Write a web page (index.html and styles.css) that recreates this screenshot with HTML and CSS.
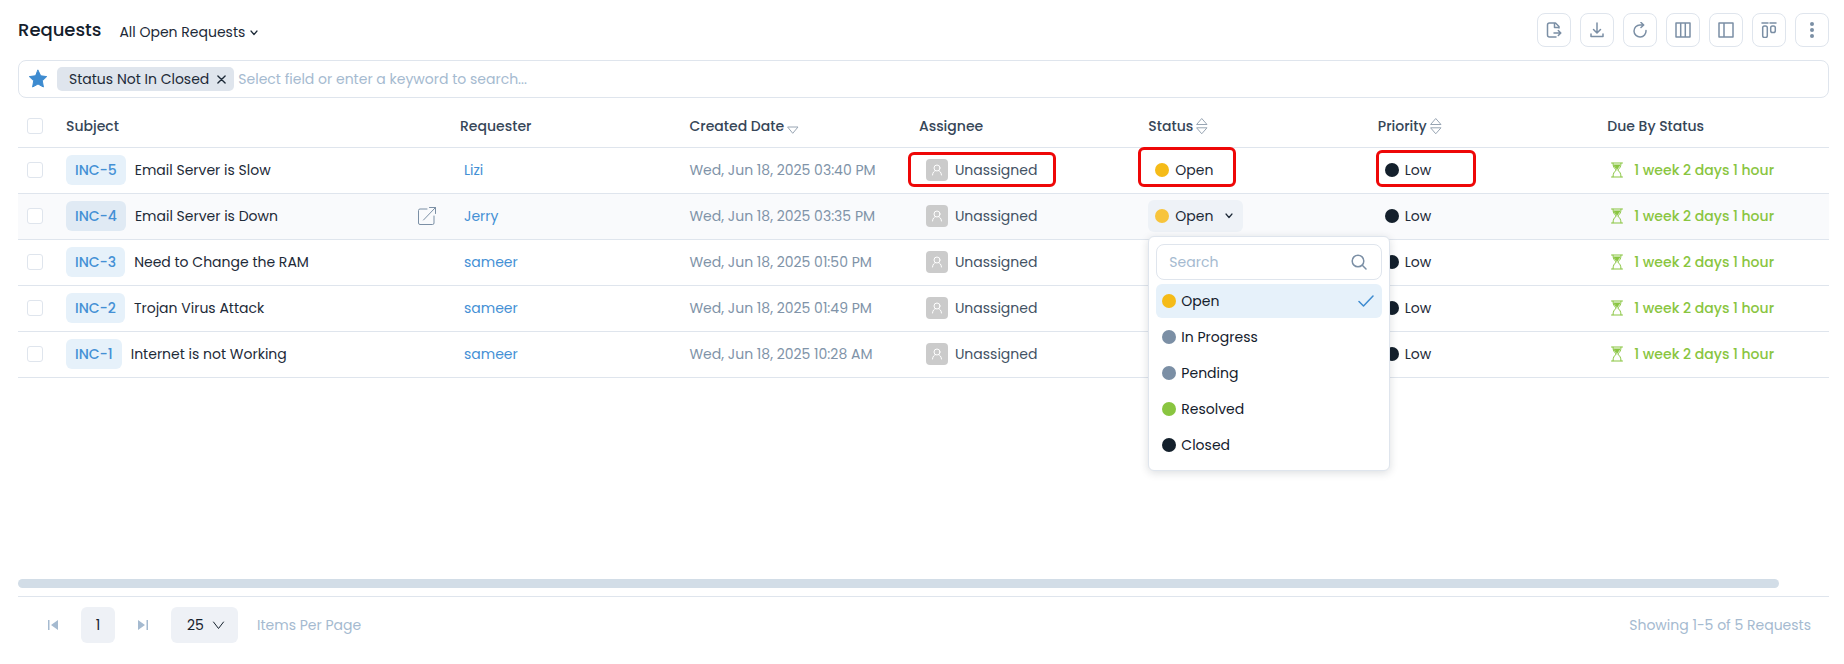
FILE: index.html
```html
<!DOCTYPE html>
<html lang="en">
<head>
<meta charset="utf-8">
<title>Requests</title>
<link rel="stylesheet" href="styles.css">
</head>
<body>
<svg class="sprite" aria-hidden="true">
  <symbol id="user" viewBox="0 0 22 22"><circle cx="11" cy="9" r="3"/><path d="M6.5 16c.3-2.600 1.600-4 3-4.400M15.500 16c-.3-2.600-1.600-4-3-4.400"/></symbol>
  <symbol id="hourglass" viewBox="0 0 12 16"><path d="M.5 1h11M.5 15h11M2 1.200c0 3.600 1.200 5 3.300 6.800C3.200 9.800 2 11.400 2 14.800M10 1.200c0 3.600-1.200 5-3.300 6.800 2.100 1.800 3.300 3.400 3.300 6.800"/><path class="sand" d="M3 3h6L6 7z"/></symbol>
  <symbol id="chevron" viewBox="0 0 8 6"><path d="M1 1l3 3.500L7 1"/></symbol>
  <symbol id="sort" viewBox="0 0 12 16"><path d="M1 6.500h10L6 .8zM1 9.800h10L6 15.500z"/></symbol>
</svg>
<main class="page">
  <header class="topbar">
    <h1 class="title">Requests</h1>
    <button class="view" type="button">All Open Requests <svg class="chevron" viewBox="0 0 8 6"><use href="#chevron"/></svg></button>
    <div class="tools">
      <button class="tool" type="button" aria-label="Export"><svg viewBox="0 0 16 16"><path d="M13 6V4.500L9.500 1H3.500Q1.500 1 1.500 3v10q0 2 2 2H10M8.500 1v4.500H13M8 11h6.500M12.300 8.500l2.500 2.500-2.500 2.500"/></svg></button>
      <button class="tool" type="button" aria-label="Download"><svg viewBox="0 0 16 16"><path d="M8 1v9.500M4.500 7.500L8 11l3.500-3.500M2 12v2.500h12V12"/></svg></button>
      <button class="tool" type="button" aria-label="Refresh"><svg viewBox="0 0 16 16"><path d="M14 8.500A6 6 0 1 1 8 3h3.500M9 .5L11.700 3 9 5.500"/></svg></button>
      <button class="tool" type="button" aria-label="Columns"><svg viewBox="0 0 16 16"><path d="M1 1h14v14H1zM5.700 1v14M10.300 1v14"/></svg></button>
      <button class="tool" type="button" aria-label="Side panel"><svg viewBox="0 0 16 16"><path d="M1 1h14v14H1zM6 1v14"/></svg></button>
      <button class="tool" type="button" aria-label="Board view"><svg viewBox="0 0 16 16"><path d="M1 1h6M9 1h6"/><rect x="1.700" y="4" width="4.600" height="11.500" rx="1.800"/><rect x="9.700" y="4" width="4.600" height="6.500" rx="1.800"/></svg></button>
      <button class="tool" type="button" aria-label="More"><svg class="solid" viewBox="0 0 16 16"><circle cx="8" cy="2" r="2"/><circle cx="8" cy="8" r="2"/><circle cx="8" cy="14" r="2"/></svg></button>
    </div>
  </header>

  <div class="filter">
    <svg class="star" viewBox="0 0 20 20"><path d="M10 1.200l2.700 5.600 6 .8-4.400 4.200 1.100 6.200L10 15l-5.400 3 1.100-6.200L1.300 7.600l6-.8z"/></svg>
    <span class="chip">Status Not In Closed <button class="chip-x" type="button" aria-label="Remove filter"><svg viewBox="0 0 10 10"><path d="M1 1l8 8M9 1L1 9"/></svg></button></span>
    <input class="query" type="text" aria-label="Search requests" placeholder="Select field or enter a keyword to search...">
  </div>

  <div class="grid">
  <table class="table">
    <colgroup><col class="c-check"><col class="c-subject"><col class="c-std"><col class="c-std"><col class="c-std"><col class="c-std"><col class="c-std"><col></colgroup>
    <thead>
      <tr>
        <th><input class="check" type="checkbox" aria-label="Select all"></th>
        <th>Subject</th><th>Requester</th>
        <th><span class="sortable">Created Date <svg class="desc" viewBox="0 0 12 8"><path d="M1 1h10L6 7z"/></svg></span></th>
        <th>Assignee</th>
        <th><span class="sortable">Status <svg class="sort" viewBox="0 0 12 16"><use href="#sort"/></svg></span></th>
        <th><span class="sortable">Priority <svg class="sort" viewBox="0 0 12 16"><use href="#sort"/></svg></span></th>
        <th>Due By Status</th>
      </tr>
    </thead>
    <tbody>
      <tr>
        <td><input class="check" type="checkbox" aria-label="Select INC-5"></td>
        <td><div class="subject"><span class="badge">INC-5</span>Email Server is Slow</div></td>
        <td><a class="person" href="#">Lizi</a></td>
        <td class="date">Wed, Jun 18, 2025 03:40 PM</td>
        <td><div class="assignee"><svg class="avatar" viewBox="0 0 22 22"><use href="#user"/></svg>Unassigned</div><span class="mark mark-assignee"></span></td>
        <td><div class="state"><i class="dot yellow"></i>Open</div><span class="mark mark-status"></span></td>
        <td><div class="state"><i class="dot black"></i>Low</div><span class="mark mark-priority"></span></td>
        <td><div class="due"><svg viewBox="0 0 12 16"><use href="#hourglass"/></svg>1 week 2 days 1 hour</div></td>
      </tr>
      <tr class="hovered">
        <td><input class="check" type="checkbox" aria-label="Select INC-4"></td>
        <td><div class="subject"><span class="badge">INC-4</span>Email Server is Down<a class="open" href="#" aria-label="Open INC-4"><svg viewBox="0 0 20 20"><path d="M10 3H3Q1.500 3 1.500 4.500V17Q1.500 18.500 3 18.500H15.500Q17 18.500 17 17V10M6.500 14L18.500 1.500M12.500 1.500h6v6"/></svg></a></div></td>
        <td><a class="person" href="#">Jerry</a></td>
        <td class="date">Wed, Jun 18, 2025 03:35 PM</td>
        <td><div class="assignee"><svg class="avatar" viewBox="0 0 22 22"><use href="#user"/></svg>Unassigned</div></td>
        <td>
          <button class="state picker" type="button" aria-expanded="true"><i class="dot yellow"></i>Open <svg class="chevron" viewBox="0 0 8 6"><use href="#chevron"/></svg></button>
          <div class="menu">
            <label class="menu-search"><input type="text" placeholder="Search" aria-label="Search status"><svg viewBox="0 0 16 16"><circle cx="7" cy="7" r="5.800"/><path d="M11.300 11.300L15 15"/></svg></label>
            <button class="option chosen" type="button"><i class="dot yellow"></i>Open<svg class="tick" viewBox="0 0 16 12"><path d="M1 6.500L5.500 11 15 1"/></svg></button>
            <button class="option" type="button"><i class="dot slate"></i>In Progress</button>
            <button class="option" type="button"><i class="dot slate"></i>Pending</button>
            <button class="option" type="button"><i class="dot green"></i>Resolved</button>
            <button class="option" type="button"><i class="dot black"></i>Closed</button>
          </div>
        </td>
        <td><div class="state"><i class="dot black"></i>Low</div></td>
        <td><div class="due"><svg viewBox="0 0 12 16"><use href="#hourglass"/></svg>1 week 2 days 1 hour</div></td>
      </tr>
      <tr>
        <td><input class="check" type="checkbox" aria-label="Select INC-3"></td>
        <td><div class="subject"><span class="badge">INC-3</span>Need to Change the RAM</div></td>
        <td><a class="person" href="#">sameer</a></td>
        <td class="date">Wed, Jun 18, 2025 01:50 PM</td>
        <td><div class="assignee"><svg class="avatar" viewBox="0 0 22 22"><use href="#user"/></svg>Unassigned</div></td>
        <td></td>
        <td><div class="state"><i class="dot black"></i>Low</div></td>
        <td><div class="due"><svg viewBox="0 0 12 16"><use href="#hourglass"/></svg>1 week 2 days 1 hour</div></td>
      </tr>
      <tr>
        <td><input class="check" type="checkbox" aria-label="Select INC-2"></td>
        <td><div class="subject"><span class="badge">INC-2</span>Trojan Virus Attack</div></td>
        <td><a class="person" href="#">sameer</a></td>
        <td class="date">Wed, Jun 18, 2025 01:49 PM</td>
        <td><div class="assignee"><svg class="avatar" viewBox="0 0 22 22"><use href="#user"/></svg>Unassigned</div></td>
        <td></td>
        <td><div class="state"><i class="dot black"></i>Low</div></td>
        <td><div class="due"><svg viewBox="0 0 12 16"><use href="#hourglass"/></svg>1 week 2 days 1 hour</div></td>
      </tr>
      <tr>
        <td><input class="check" type="checkbox" aria-label="Select INC-1"></td>
        <td><div class="subject"><span class="badge">INC-1</span>Internet is not Working</div></td>
        <td><a class="person" href="#">sameer</a></td>
        <td class="date">Wed, Jun 18, 2025 10:28 AM</td>
        <td><div class="assignee"><svg class="avatar" viewBox="0 0 22 22"><use href="#user"/></svg>Unassigned</div></td>
        <td></td>
        <td><div class="state"><i class="dot black"></i>Low</div></td>
        <td><div class="due"><svg viewBox="0 0 12 16"><use href="#hourglass"/></svg>1 week 2 days 1 hour</div></td>
      </tr>
    </tbody>
  </table>
  </div>

  <div class="scroll"></div>
  <footer class="pager">
    <button class="step" type="button" aria-label="First page"><svg viewBox="0 0 10 12"><path d="M0 1h1.500v10H0zM10 1v10L3 6z"/></svg></button>
    <button class="current" type="button">1</button>
    <button class="step" type="button" aria-label="Last page"><svg viewBox="0 0 10 12"><path d="M8.500 1H10v10H8.500zM0 1v10l7-5z"/></svg></button>
    <span class="size"><select id="size"><option>25</option></select><svg viewBox="0 0 12 9"><path d="M1 1l5 6.500L11 1"/></svg></span>
    <label for="size">Items Per Page</label>
    <span class="count">Showing 1-5 of 5 Requests</span>
  </footer>
</main>
</body>
</html>
```
FILE: styles.css
```css
* { box-sizing: border-box; }

body {
  margin: 0;
  background: #fff;
  color: #1d2a38;
  font: 14px/20px Poppins, Inter, "Open Sans", sans-serif;
}

button, input, select {
  margin: 0;
  padding: 0;
  border: 0;
  background: none;
  color: inherit;
  font: inherit;
}

svg {
  flex: none;
  fill: none;
  stroke: currentColor;
  stroke-linecap: round;
  stroke-linejoin: round;
}

a { text-decoration: none; }
.sprite { position: absolute; width: 0; height: 0; }

.page {
  display: flex;
  flex-direction: column;
  min-height: 100vh;
  padding: 13px 15px 21px 18px;
}

/* Title bar */
.topbar { display: flex; align-items: center; height: 34px; }
.title { margin: 0; font-size: 18px; font-weight: 500; color: #14202c; }
.view { display: flex; align-items: center; gap: 5px; margin-left: 18px; padding-top: 3px; }
.view .chevron { margin-top: 2px; }
.chevron { width: 8px; height: 6px; stroke-width: 1.2; }
.tools { display: flex; gap: 9px; margin-left: auto; }
.tool {
  display: grid;
  place-items: center;
  width: 34px;
  height: 34px;
  border: 1px solid #dfe5ed;
  border-radius: 8px;
  color: #7b8fa5;
}
.tool svg { width: 16px; height: 16px; stroke-width: 1.5; }
.tool .solid { fill: currentColor; stroke: none; }

/* Filter bar */
.filter {
  display: flex;
  align-items: center;
  height: 38px;
  margin-top: 13px;
  padding: 0 9px;
  border: 1px solid #dfe5ed;
  border-radius: 8px;
}
.star { width: 20px; height: 20px; fill: #3d8bd0; stroke: #3d8bd0; }
.chip {
  display: flex;
  align-items: center;
  gap: 8px;
  height: 24px;
  margin: 0 4px 0 9px;
  padding: 0 8px 0 12px;
  border-radius: 5px;
  background: #dfe5ed;
}
.chip-x { display: grid; }
.chip-x svg { width: 9px; height: 9px; stroke-width: 1.5; }
.query { flex: 1; min-width: 0; outline: 0; }
::placeholder { color: #a5bad0; opacity: 1; }

/* Table */
.grid { flex: 1; }
.table { width: 100%; border-collapse: collapse; table-layout: fixed; }
.c-check { width: 48px; }
.c-subject { width: 394px; }
.c-std { width: 12.67%; }
th, td {
  position: relative;
  height: 46px;
  padding: 0;
  border-bottom: 1px solid #dfe5ed;
  text-align: left;
  white-space: nowrap;
}
th { height: 49px; padding-top: 8px; font-weight: 500; color: #364658; }
.sortable { display: flex; align-items: center; gap: 3px; }
.sort { width: 12px; height: 16px; color: #98a5b3; }
.desc { width: 12px; height: 8px; margin-top: 8px; color: #98a5b3; }
.check {
  display: block;
  width: 16px;
  height: 16px;
  margin-left: 9px;
  border: 1px solid #dfe5ed;
  border-radius: 3px;
  background: #fff;
  appearance: none;
}
.hovered { background: #f9fafc; }
.subject { display: flex; align-items: center; gap: 9px; }
.badge {
  padding: 5px 9px;
  border-radius: 6px;
  background: #e6f1fa;
  color: #4490d5;
  font-weight: 500;
}
.hovered .badge { background: #e0eaf4; }
.open { margin: 0 23px 0 auto; color: #7b8fa5; }
.open svg { display: block; width: 20px; height: 20px; }
.person { margin-left: 4px; color: #4490d5; }
.date { color: #8093a8; }
.assignee { display: flex; align-items: center; gap: 7px; padding-left: 7px; color: #435264; }
.avatar { width: 22px; height: 22px; border-radius: 4px; background: #cbcbcb; color: #fff; }
.state {
  display: inline-flex;
  align-items: center;
  height: 32px;
  padding: 0 7px;
}
.dot { flex: none; width: 14px; height: 14px; margin-right: 6px; border-radius: 50%; }
.yellow { background: #f5bb18; }
.slate { background: #7b8fa5; }
.green { background: #89c540; }
.black { background: #14202c; }
.picker { border-radius: 6px; background: #eef2f7; }
.picker .chevron { margin: 0 3px 0 12px; }
.picker .yellow { background: #f7c43c; }
.due { display: flex; align-items: center; gap: 11px; padding-left: 4px; color: #89c540; font-weight: 500; }
.due svg { width: 12px; height: 16px; }
.sand { fill: currentColor; }

/* Red callouts around the first row's values */
.mark { position: absolute; border: 3px solid #ee0707; border-radius: 6px; }
.mark-assignee { top: 4px; left: -11px; width: 148px; height: 35px; }
.mark-status { top: -1px; left: -10px; width: 98px; height: 40px; }
.mark-priority { top: 2px; left: -2px; width: 100px; height: 37px; }

/* Status menu */
.menu {
  position: absolute;
  z-index: 2;
  top: 42px;
  left: 0;
  display: grid;
  grid-template-columns: minmax(0, 1fr);
  gap: 2px;
  width: 242px;
  padding: 7px 7px 8px;
  border: 1px solid #dfe5ed;
  border-radius: 6px;
  background: #fff;
  box-shadow: 0 2px 8px rgba(20, 32, 44, .15);
}
.menu-search {
  display: flex;
  align-items: center;
  height: 36px;
  margin-bottom: 2px;
  padding: 0 14px 0 12px;
  border: 1px solid #dfe5ed;
  border-radius: 8px;
}
.menu-search input { flex: 1; min-width: 0; outline: 0; }
.menu-search svg { width: 16px; height: 16px; color: #7b8fa5; stroke-width: 1.5; }
.option { display: flex; align-items: center; height: 34px; padding: 0 8px 0 6px; border-radius: 6px; color: #14202c; }
.option .dot { margin-right: 5px; }
.chosen { background: #e6f1fa; }
.tick { width: 16px; height: 12px; margin-left: auto; color: #3d8bd0; stroke-width: 1.5; }

/* Footer */
.scroll { width: 97.25%; height: 9px; margin-bottom: 8px; border-radius: 5px; background: #d2dde7; }
.pager {
  display: flex;
  align-items: center;
  padding-top: 10px;
  border-top: 1px solid #dfe5ed;
  color: #a5bad0;
}
.step { display: grid; place-items: center; width: 10px; height: 36px; margin-left: 30px; }
.step svg { width: 10px; height: 12px; fill: currentColor; stroke: none; }
.current, .size { height: 36px; border-radius: 6px; background: #eef1f6; color: #14202c; }
.current { width: 34px; margin: 0 -7px 0 23px; }
.size { position: relative; width: 67px; margin: 0 19px 0 23px; }
.size select { width: 100%; height: 100%; padding-left: 16px; appearance: none; }
.size svg { position: absolute; top: 14px; right: 13px; width: 13px; height: 9px; pointer-events: none; }
.count { margin: 0 18px 0 auto; }
```
